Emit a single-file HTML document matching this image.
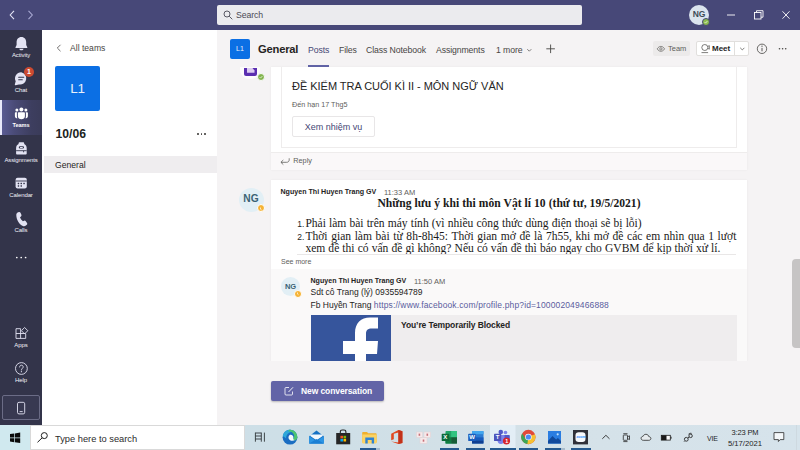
<!DOCTYPE html>
<html lang="vi">
<head>
<meta charset="utf-8">
<title>General (10/06) | Microsoft Teams</title>
<style>
*{box-sizing:border-box;margin:0;padding:0}
html,body{width:800px;height:450px;overflow:hidden;background:#f5f3f4}
body{position:relative;font-family:"Liberation Sans",sans-serif;color:#252423;font-size:9px;-webkit-font-smoothing:antialiased}
.abs{position:absolute}
svg{position:absolute;overflow:visible}
/* title bar */
#titlebar{left:0;top:0;width:800px;height:29.600px;background:#474878;box-shadow:0 0 1px #2b2c55}
#search{left:217px;top:5px;width:365px;height:20px;background:#ebebee;border-radius:2px}
#search span{position:absolute;left:19px;top:4px;font-size:8.700px;letter-spacing:-.1px;color:#4a4a55;line-height:12px}
#me{left:689px;top:5px;width:20px;height:20px;border-radius:50%;background:#dbe4ee;color:#3e4c57;font-size:8.500px;font-weight:bold;text-align:center;line-height:19px;letter-spacing:-.2px}
#medot{left:701.800px;top:18.200px;width:8.200px;height:8.200px;border-radius:50%;background:#8cbd4f;border:1px solid #464775}
/* left rail */
#rail{left:0;top:30px;width:42px;height:395px;background:#33344a}
.rl{position:absolute;left:0;width:42px;text-align:center;color:#f0f0f8;font-size:6px;line-height:8px;letter-spacing:-.1px}
#railsel{left:0;top:100px;width:42px;height:35px;background:linear-gradient(90deg,#5c5d97 0%,#4a4b77 35%,#3d3e5f 75%,#3a3b59 100%)}
#railbar{left:0;top:100px;width:2px;height:35px;background:#e9e9fb}
#badge{left:24px;top:67px;width:10px;height:10px;border-radius:50%;background:#cc4a31;color:#fff;font-size:7px;font-weight:bold;text-align:center;line-height:10px}
#phonebox{left:2px;top:395px;width:38px;height:25px;border:1px solid #6b6c86;border-radius:2px;background:#383951}
/* team list */
#list{left:42px;top:30px;width:175px;height:395px;background:#ffffff}
#allteams{left:70px;top:43px;font-size:8.600px;color:#484644;line-height:11px}
#tile{left:55px;top:66px;width:45px;height:45px;background:#0b6fe4;border-radius:2px;color:#e9f1fb;font-size:13.500px;letter-spacing:-.3px;text-align:center;line-height:46px}
#tname{left:55.500px;top:126.500px;font-size:12.200px;font-weight:bold;color:#201f1e;line-height:14px}
#chsel{left:44px;top:156px;width:173px;height:17px;background:#efedef}
#chname{left:55px;top:160px;font-size:8.600px;color:#252423;line-height:11px}
.dots i{position:absolute;width:1.6px;height:1.6px;border-radius:50%;background:#484644;top:0}
/* main */
#main{left:217px;top:30px;width:583px;height:395px;background:#f5f3f4}
#hdrline{left:217px;top:67px;width:583px;height:1px;background:#eceaea}
#chtile{left:230px;top:39px;width:20px;height:20px;background:#0b6fe4;border-radius:2px;color:#e9f1fb;font-size:7px;text-align:center;line-height:20px}
#chtitle{left:258px;top:42px;font-size:11.200px;font-weight:bold;color:#252423;line-height:15px;letter-spacing:-.2px}
.tab{position:absolute;top:45px;font-size:8.700px;color:#484644;line-height:11px;letter-spacing:-.1px;white-space:nowrap}
#tabul{left:308px;top:65.400px;width:21px;height:2.200px;background:#6264a7}
#teambtn{left:653px;top:41px;width:37px;height:15px;background:#eceaea;border-radius:2px}
#teambtn span{position:absolute;left:15px;top:3px;font-size:7.5px;color:#605e5c;line-height:9px}
#meetbtn{left:696px;top:41px;width:53px;height:15px;background:#ffffff;border:1px solid #e1dfdd;border-radius:2px}
#meetbtn span{position:absolute;left:15px;top:2px;font-size:8px;font-weight:bold;color:#252423;line-height:10px}
#meetsep{left:734px;top:42px;width:1px;height:13px;background:#e1dfdd}
/* cards */
.card{position:absolute;background:#ffffff}
#c1{left:271px;top:67px;width:476px;height:103px;box-shadow:0 0 2px rgba(0,0,0,.06)}
#c1in{left:281px;top:67px;width:456px;height:81px;border:1px solid #eeecec;border-top:none}
#c1foot{left:271px;top:151.500px;width:476px;height:18px;background:#faf8f9;border-top:1px solid #eeecec}
#asgtitle{left:292px;top:79px;font-size:11px;color:#252423;line-height:15px;letter-spacing:-.03px;white-space:nowrap}
#due{left:292px;top:100px;font-size:7.200px;color:#605e5c;line-height:9px}
#xem{left:292px;top:115.500px;width:83px;height:21px;border:1px solid #e8e6e7;border-radius:2px;background:#fff;text-align:center;font-size:9px;color:#464775;line-height:21px}
#reply{left:293.300px;top:156px;font-size:7.300px;color:#605e5c;line-height:9px}
#c2{left:271px;top:179.500px;width:476px;height:181px;box-shadow:0 0 2px rgba(0,0,0,.06)}
#c2sub{left:271px;top:269px;width:476px;height:91.600px;background:#faf9f9}
.nm{position:absolute;font-size:7.100px;font-weight:bold;color:#252423;line-height:9px;white-space:nowrap}
.tm{position:absolute;font-size:7.5px;color:#605e5c;line-height:9px;white-space:nowrap}
.jl{text-align:justify;text-align-last:justify}
.ser{position:absolute;font-family:"Liberation Serif",serif;color:#1b1a19;white-space:nowrap}
.av{position:absolute;border-radius:50%;background:#e2eff5;color:#3a6274;font-weight:bold;text-align:center}
.away{position:absolute;border-radius:50%;background:#f5b335;border:1px solid #fff}
#seemore{left:281px;top:257px;font-size:7px;color:#605e5c;line-height:9px}
.body9{position:absolute;font-size:9px;color:#252423;line-height:11px;white-space:nowrap}
#fbcard{left:311px;top:315.400px;width:426px;height:45.200px;background:#efedee}
#fbimg{left:311px;top:315.400px;width:80px;height:45.200px;background:#36559c;overflow:hidden}
#fbtitle{left:401px;top:320px;font-size:8.5px;font-weight:bold;color:#252423;line-height:10px;white-space:nowrap;letter-spacing:-.1px}
#fade{left:217px;top:360.600px;width:583px;height:12px;background:#f5f3f4}
#newconv{left:271px;top:381px;width:113px;height:20px;background:#6264a7;border-radius:2px;box-shadow:0 1px 2px rgba(0,0,0,.25)}
#newconv span{position:absolute;left:30px;top:5px;font-size:8.5px;font-weight:bold;color:#fff;line-height:10px;white-space:nowrap;letter-spacing:-.1px}
#scroll{left:792px;top:258.500px;width:12px;height:89px;background:#c6c4c4;border-radius:4px}
/* taskbar */
#taskbar{left:0;top:425px;width:800px;height:25px;background:linear-gradient(90deg,#cddfe7 0%,#cedfe7 40%,#d2e0e7 55%,#d5e2e9 75%,#d6e3eb 100%)}
#start{left:0;top:425px;width:30px;height:25px;background:#d0e9ef}
#tsearch{left:30px;top:425px;width:215px;height:25px;background:#ffffff;border:1px solid #d9d9d9}
#tsearch span{position:absolute;left:24px;top:6.500px;font-size:9.300px;color:#2b2b2b;line-height:12px}
.tk{position:absolute;font-size:7.5px;color:#1f1f1f;line-height:9px;white-space:nowrap}
.run{position:absolute;top:448.300px;height:1.700px;background:#25598f}
</style>
</head>
<body>
<!-- TITLE BAR -->
<div id="titlebar" class="abs"></div>
<svg style="left:9px;top:10px" width="26" height="10" viewBox="0 0 26 10"><path d="M5 .8 1.2 5 5 9.200" fill="none" stroke="#e4e4f5" stroke-width="1.100"/><path d="M19.500 .8 23.300 5 19.500 9.200" fill="none" stroke="#a9aad3" stroke-width="1.100"/></svg>
<div id="search" class="abs"><svg style="left:6px;top:5px" width="10" height="10" viewBox="0 0 10 10"><circle cx="4" cy="4" r="3" fill="none" stroke="#4a4a55" stroke-width="0.900"/><path d="M6.200 6.200 9.300 9.300" stroke="#4a4a55" stroke-width="0.900"/></svg><span>Search</span></div>
<div id="me" class="abs">NG</div>
<div id="medot" class="abs"></div><svg style="left:703.900px;top:20.400px" width="4" height="4" viewBox="0 0 4 4"><path d="M.6 2.100l1 1 1.800-2.100" fill="none" stroke="#f4f9ee" stroke-width=".7"/></svg>
<svg style="left:726px;top:10px" width="70" height="10" viewBox="0 0 70 10"><path d="M1 5h8" stroke="#fff" stroke-width="0.900"/><rect x="28.500" y="2.500" width="6.500" height="6.500" fill="none" stroke="#fff" stroke-width="0.900"/><path d="M30.500 2.500v-1.800h6.500v6.500h-2" fill="none" stroke="#fff" stroke-width="0.900"/><path d="M56.500 1.300l7 7.400M63.500 1.300l-7 7.400" stroke="#fff" stroke-width="0.900"/></svg>

<!-- LEFT RAIL -->
<div id="rail" class="abs"></div>
<div id="railsel" class="abs"></div>
<div id="railbar" class="abs"></div>
<div id="phonebox" class="abs"></div>
<div id="railicons">
<svg style="left:0;top:30px" width="42" height="395" viewBox="0 30 42 395">
<!-- bell -->
<path d="M21.400 37c-3.100 0-4.800 2.300-4.800 5.200v2.900l-1.100 2.100c-.2.400 0 .8.500.8h10.800c.5 0 .7-.4.500-.8l-1.100-2.100v-2.900c0-2.900-1.700-5.200-4.800-5.200z" fill="#e3e3f3"/>
<path d="M19.300 48.700h4.200c-.2 1-1 1.600-2.100 1.600s-1.900-.6-2.100-1.600z" fill="#e3e3f3"/>
<!-- chat -->
<path d="M21.200 72.200a6.200 6.200 0 0 0-5.500 9.100l-.9 3.200c-.1.500.3.900.8.800l3.300-.9a6.200 6.200 0 1 0 2.300-12.200z" fill="#e3e3f3"/>
<path d="M18.700 77.200h5M18.700 79.700h3.600" stroke="#33344a" stroke-width="1.100" stroke-linecap="round"/>
<!-- teams -->
<g fill="#ffffff">
<circle cx="21.400" cy="109.500" r="2"/>
<circle cx="16.900" cy="110" r="1.500"/>
<circle cx="25.900" cy="110" r="1.500"/>
<path d="M18.600 112.300h5.600c.4 0 .7.300.7.700v3.300c0 1.700-1.500 3-3.500 3s-3.500-1.300-3.500-3V113c0-.4.300-.7.700-.7z"/>
<path d="M15.600 112.300h1.600c-.2.300-.3.500-.3.800v3.400c0 .7.200 1.300.5 1.800-1.500 0-2.500-.9-2.500-2.300v-3c0-.4.300-.7.700-.7z"/>
<path d="M27.200 112.300h-1.600c.2.300.3.500.3.800v3.400c0 .7-.2 1.300-.5 1.800 1.500 0 2.500-.9 2.500-2.300v-3c0-.4-.3-.7-.7-.7z"/>
</g>
<!-- assignments (backpack) -->
<path d="M19.500 142.300h3.800c.5 0 .9.400.9.900v.9c1.500.7 2.500 2.200 2.500 3.900v5.400c0 .6-.5 1.100-1.100 1.100h-8.400c-.6 0-1.100-.5-1.100-1.100V148c0-1.700 1-3.200 2.500-3.900v-.9c0-.5.400-.9.900-.9z" fill="#e3e3f3"/>
<rect x="18.800" y="146.300" width="5.200" height="2.300" rx="1" fill="#33344a"/>
<rect x="19.900" y="146.900" width="3" height="1.100" rx=".5" fill="#e3e3f3"/>
<path d="M16.100 150.700h10.600" stroke="#33344a" stroke-width=".9"/>
<path d="M23.600 150.700v1.600" stroke="#33344a" stroke-width=".9"/>
<!-- calendar -->
<rect x="15.600" y="177.700" width="11.200" height="10.800" rx="2" fill="#e3e3f3"/>
<path d="M15.600 181h11.200" stroke="#33344a" stroke-width=".9"/>
<g fill="#33344a"><rect x="17.700" y="182.700" width="1.500" height="1.500" rx=".4"/><rect x="20.500" y="182.700" width="1.500" height="1.500" rx=".4"/><rect x="23.300" y="182.700" width="1.500" height="1.500" rx=".4"/><rect x="17.700" y="185.200" width="1.500" height="1.500" rx=".4"/><rect x="20.500" y="185.200" width="1.500" height="1.500" rx=".4"/></g>
<!-- calls -->
<path d="M17.600 212.500l1.300-.4c.7-.2 1.400.2 1.700.8l.8 1.900c.2.600.1 1.200-.4 1.600l-1 .9c.5 1.500 1.600 3 2.900 3.900l1.300-.5c.6-.2 1.200 0 1.600.5l1.200 1.700c.4.600.3 1.300-.2 1.800l-.9.900c-.8.800-2 1-3 .5-4-2-6.500-6.500-6.600-11.100 0-1.100.5-2.100 1.300-2.500z" fill="#e3e3f3"/>
<!-- more -->
<g fill="#ffffff"><circle cx="16.800" cy="257.500" r=".85"/><circle cx="21.200" cy="257.500" r=".85"/><circle cx="25.600" cy="257.500" r=".85"/></g>
<!-- apps -->
<g fill="none" stroke="#e3e3f3" stroke-width=".9" stroke-linejoin="round">
<path d="M20.600 328.700h-4.600v9.700h9.700v-4.600"/>
<path d="M20.600 328.700v9.700M16 333.500h9.700"/>
<path d="M24.600 327.500l3.200 3.200-3.200 3.200-3.200-3.200z"/>
</g>
<!-- help -->
<circle cx="21.400" cy="368.500" r="5.900" fill="none" stroke="#e3e3f3" stroke-width=".9"/>
<path d="M19.600 367c0-1.100.8-1.800 1.800-1.800s1.800.7 1.800 1.700c0 1.400-1.800 1.500-1.800 3.100" fill="none" stroke="#e3e3f3" stroke-width=".9" stroke-linecap="round"/>
<circle cx="21.400" cy="371.700" r=".6" fill="#e3e3f3"/>
<!-- phone -->
<rect x="17.500" y="402.300" width="7.200" height="11.600" rx="1.500" fill="none" stroke="#e3e3f3" stroke-width=".9"/>
<path d="M20 411.600h2.300" stroke="#e3e3f3" stroke-width=".9" stroke-linecap="round"/>
</svg>
</div>
<div class="rl" style="top:51px">Activity</div>
<div class="rl" style="top:86px">Chat</div>
<div class="rl" style="top:121px;color:#fff;font-weight:bold;font-size:5.600px">Teams</div>
<div class="rl" style="top:156px">Assignments</div>
<div class="rl" style="top:191px">Calendar</div>
<div class="rl" style="top:226px">Calls</div>
<div class="rl" style="top:341px">Apps</div>
<div class="rl" style="top:376px">Help</div>
<div id="badge" class="abs">1</div>

<!-- TEAM LIST -->
<div id="list" class="abs"></div>
<svg style="left:56px;top:44px" width="6" height="8" viewBox="0 0 6 8"><path d="M4.500 .8 1.300 4 4.500 7.200" fill="none" stroke="#605e5c" stroke-width="0.900"/></svg>
<div id="allteams" class="abs">All teams</div>
<div id="tile" class="abs">L1</div>
<div id="tname" class="abs">10/06</div>
<div class="abs dots" style="left:197px;top:133px"><i style="left:0"></i><i style="left:3.500px"></i><i style="left:7px"></i></div>
<div id="chsel" class="abs"></div>
<div id="chname" class="abs">General</div>

<!-- MAIN -->
<div id="main" class="abs"></div>
<div id="chtile" class="abs">L1</div>
<div id="chtitle" class="abs">General</div>
<div class="tab" style="left:308px;color:#464775">Posts</div>
<div class="tab" style="left:339px">Files</div>
<div class="tab" style="left:366px">Class Notebook</div>
<div class="tab" style="left:436px">Assignments</div>
<div class="tab" style="left:496px">1 more</div>
<div id="tabul" class="abs"></div>
<div id="teambtn" class="abs"><span>Team</span></div>
<div id="meetbtn" class="abs"><span>Meet</span></div>
<div id="meetsep" class="abs"></div>

<svg style="left:217px;top:30px" width="583" height="38" viewBox="217 30 583 38">
<path d="M527.300 49.200l2 2 2-2" fill="none" stroke="#605e5c" stroke-width=".8"/>
<path d="M546.300 48.800h8.600M550.600 44.500v8.600" stroke="#484644" stroke-width=".9"/>
<path d="M657.200 48.900c1-1.700 2.300-2.500 3.700-2.500s2.700.8 3.700 2.500c-1 1.600-2.300 2.400-3.700 2.400s-2.700-.8-3.700-2.400z" fill="none" stroke="#605e5c" stroke-width=".7"/><circle cx="660.900" cy="48.900" r="1.200" fill="none" stroke="#605e5c" stroke-width=".7"/>
<g fill="none" stroke="#484644" stroke-width=".7"><circle cx="704.800" cy="47.500" r="3"/><path d="M701.500 52.600h6.600M708 46.400l1.300-.8v3.600l-1.300-.8"/></g>
<path d="M740.200 47.800l2.100 2.100 2.100-2.100" fill="none" stroke="#605e5c" stroke-width=".8"/>
<circle cx="762" cy="48.800" r="4.700" fill="none" stroke="#484644" stroke-width=".8"/><path d="M762 47.900v3.400" stroke="#484644" stroke-width=".9"/><circle cx="762" cy="46.200" r=".6" fill="#484644"/>
<g fill="#484644"><circle cx="779.500" cy="48.800" r=".8"/><circle cx="782.600" cy="48.800" r=".8"/><circle cx="785.700" cy="48.800" r=".8"/></g>
</svg>
<!-- CARD 1 -->
<div id="c1" class="card"></div>
<div id="c1in" class="abs"></div>
<div id="c1foot" class="abs"></div>
<div id="asgtitle" class="abs">ĐỀ KIỂM TRA CUỐI KÌ II - MÔN NGỮ VĂN</div>
<div id="due" class="abs">Đến hạn 17 Thg5</div>
<div id="xem" class="abs">Xem nhiệm vụ</div>
<svg style="left:280px;top:158px" width="10" height="7" viewBox="0 0 10 7"><path d="M9.200 .3v1.500c0 1.500-1 2.500-2.500 2.500h-5.700M3.300 2l-2.400 2.300 2.400 2.300" fill="none" stroke="#605e5c" stroke-width=".8"/></svg>
<div id="reply" class="abs">Reply</div>

<div class="abs" style="left:240px;top:67px;width:20px;height:12px;background:#fdfcfc;border-radius:0 0 9px 9px"></div>
<div class="abs" style="left:243.500px;top:67.500px;width:13.500px;height:8.300px;background:#5b2fb0;border-radius:0 0 2px 2px"></div>
<svg style="left:246.500px;top:67.500px" width="8" height="5" viewBox="0 0 8 5"><path d="M0 0h5.500l2 2.500v2.300h-7.500z" fill="#dccdf1"/></svg>
<div class="abs" style="left:256.800px;top:73.300px;width:8px;height:8px;border-radius:50%;background:#82b44d;border:.7px solid #fbfbfb"></div>
<svg style="left:258.800px;top:75.300px" width="4" height="4" viewBox="0 0 4 4"><path d="M.6 2.100l1 1 1.800-2.100" fill="none" stroke="#f4f9ee" stroke-width=".7"/></svg>
<!-- CARD 2 -->
<div id="c2" class="card"></div>
<div id="c2sub" class="abs"></div>
<div class="av" style="left:238.500px;top:188px;width:25px;height:24px;font-size:10.200px;line-height:22px">NG</div>
<div class="away" style="left:256.500px;top:204.300px;width:8px;height:8px"></div><svg style="left:259px;top:206.500px" width="4" height="4" viewBox="0 0 4 4"><path d="M1.500 .5v1.700l1.200.8" fill="none" stroke="#fff" stroke-width=".7"/></svg>
<div class="nm" style="left:280.500px;top:188px">Nguyen Thi Huyen Trang GV</div>
<div class="tm" style="left:384px;top:188px">11:33 AM</div>
<div class="ser jl" style="left:377.500px;top:197.300px;width:263px;font-size:11.600px;font-weight:bold;line-height:13px">Những lưu ý khi thi môn Vật lí 10 (thứ tư, 19/5/2021)</div>
<div class="abs" style="left:297.300px;top:219.500px;font-size:8.500px;line-height:9px;color:#252423">1.</div>
<div class="ser jl" style="left:305.400px;top:217.300px;width:336.300px;font-size:11.550px;line-height:13px">Phải làm bài trên máy tính (vì nhiều công thức dùng điện thoại sẽ bị lỗi)</div>
<div class="abs" style="left:297.300px;top:232.500px;font-size:8.500px;line-height:9px;color:#252423">2.</div>
<div class="ser jl" style="left:305.400px;top:229.500px;width:431px;font-size:11.550px;line-height:13px">Thời gian làm bài từ 8h-8h45: Thời gian mở đề là 7h55, khi mở đề các em nhìn qua 1 lượt</div>
<div class="abs" style="left:297px;top:241px;width:440px;height:13px;overflow:hidden"><div class="ser jl" style="left:8.400px;top:1.300px;width:415px;font-size:11.550px;line-height:13px">xem đề thi có vấn đề gì không? Nếu có vấn đề thì báo ngay cho GVBM để kịp thời xử lí.</div></div>
<div class="abs" style="left:297px;top:254px;width:439px;height:1px;background:#e9e7e7"></div>
<div id="seemore" class="abs">See more</div>
<div class="av" style="left:281px;top:277px;width:19px;height:19px;font-size:7.500px;line-height:19px">NG</div>
<div class="away" style="left:294px;top:289.800px;width:7.800px;height:7.800px"></div><svg style="left:296.200px;top:291.900px" width="4" height="4" viewBox="0 0 4 4"><path d="M1.500 .5v1.600l1.100.7" fill="none" stroke="#fff" stroke-width=".65"/></svg>
<div class="nm" style="left:310.500px;top:276.500px">Nguyen Thi Huyen Trang GV</div>
<div class="tm" style="left:414px;top:276.500px">11:50 AM</div>
<div class="body9" style="left:310.500px;top:287px;font-size:8.500px">Sdt cô Trang (lý) 0935594789</div>
<div class="body9" style="left:310.500px;top:300px;font-size:8.500px">Fb Huyền Trang <span style="color:#5b5d9e;letter-spacing:.13px">https://www.facebook.com/profile.php?id=100002049466888</span></div>
<div id="fbcard" class="abs"></div>
<div id="fbimg" class="abs"><svg style="left:0;top:0" width="80" height="46" viewBox="311 315 80 46"><path d="M355 361.500v-7.500h-12v-13h12v-8c0-10 6-15.600 15-15.600h8v11.200h-6c-4.300 0-6 1.700-6 5.400v7h12l-1 13h-11v7.500z" fill="#ffffff"/></svg></div>
<div id="fbtitle" class="abs">You’re Temporarily Blocked</div>
<div id="fade" class="abs"></div>
<div id="newconv" class="abs"><svg style="left:13px;top:5px" width="10" height="10" viewBox="0 0 10 10"><path d="M8.500 5.500v2.500a1 1 0 0 1-1 1h-5.500a1 1 0 0 1-1-1v-5.500a1 1 0 0 1 1-1h3" fill="none" stroke="#fff" stroke-width="0.800"/><path d="M4.500 6 9 1.300" stroke="#fff" stroke-width="0.900"/></svg><span>New conversation</span></div>
<div id="scroll" class="abs"></div>

<!-- TASKBAR -->
<div id="taskbar" class="abs"></div>
<div id="start" class="abs"></div>
<div id="tsearch" class="abs"><span>Type here to search</span></div>
<svg id="tbicons" style="left:0;top:425px" width="800" height="25" viewBox="0 425 800 25">
<!-- windows logo -->
<g fill="#0a0a0a"><path d="M10 434.100l4.200-.6v4h-4.200zM14.900 433.400l5.300-.8v4.900h-5.300zM10 438.200h4.200v4l-4.200-.6zM14.900 438.200h5.300v4.900l-5.300-.8z"/></g>
<!-- search glyph -->
<circle cx="44.300" cy="435.600" r="3" fill="none" stroke="#1f1f1f" stroke-width="1"/><path d="M42.200 437.800l-4.700 4.500" stroke="#1f1f1f" stroke-width="1"/>
<!-- task view -->
<g fill="none" stroke="#2f3438" stroke-width=".9"><path d="M255.400 432.600v9.100M261.300 432.600v9.100M255.400 433h5.900M255.400 436h5.900M255.400 439h5.900M264.400 432.600v9.100"/></g>
<!-- edge -->
<circle cx="290" cy="437.200" r="7.400" fill="#1a6dc2"/>
<path d="M282.700 436.300c.5-3.800 3.600-6.500 7.300-6.500 2.300 0 4.300 1 5.700 2.600-2-.9-4.600-.8-6.500.4-2.100 1.300-3.200 3.400-3.100 5.800-1.200-1.400-2.600-2.400-3.400-2.300z" fill="#2fa8d8"/>
<path d="M290 429.800c4.100 0 7.400 3.300 7.400 7.400 0 1.900-1.500 3.100-3.200 3.100-1.300 0-2-.5-2.300-1.100 2.300-.7 3-3.400 1.400-5.500-1.200-1.600-3.300-2.500-5.300-2.300.6-1 1.300-1.600 2-1.600z" fill="#4cc470"/>
<path d="M289.600 435c2.300-.7 4.300 1.200 3.700 3.200-.3 1 .3 1.700 1.500 1.800-1.700 1.300-4.400 1-5.700-.8-1-1.300-.7-3.200.5-4.200z" fill="#f4f9fc"/>
<!-- mail -->
<path d="M309.200 436.200l7.300-5.600 7.300 5.600v7.300h-14.600z" fill="#1672c4"/>
<path d="M310.300 436l6.200 4.300 6.200-4.300v-1.500h-12.400z" fill="#f3f8fc"/>
<path d="M309.200 436.200l7.300 4.800 7.300-4.800v7.300h-14.600z" fill="#2c95e4"/>
<path d="M309.200 443.500l7.300-4.500 7.300 4.500z" fill="#1b7fd4"/>
<!-- store -->
<path d="M340.300 433.200v-1.300c0-1.100.9-1.900 2-1.900h1.600c1.100 0 2 .8 2 1.900v1.300" fill="none" stroke="#262626" stroke-width="1.100"/>
<rect x="336.200" y="433" width="14" height="11.300" fill="#262626"/>
<rect x="340.400" y="435.800" width="2.600" height="2.600" fill="#f25022"/><rect x="343.500" y="435.800" width="2.600" height="2.600" fill="#7fba00"/><rect x="340.400" y="438.900" width="2.600" height="2.600" fill="#00a4ef"/><rect x="343.500" y="438.900" width="2.600" height="2.600" fill="#ffb900"/>
<!-- explorer -->
<path d="M362.200 433c0-.6.400-1 1-1h3.800l1.200 1.200h7.400c.6 0 1 .4 1 1v8.300h-14.400z" fill="#efb02e"/>
<path d="M362.200 434.600h14.400v8c0 .5-.3.800-.7.800h-13c-.4 0-.7-.3-.7-.8z" fill="#fbd364"/>
<path d="M365.300 437.600h8.800v5.800h-2.400v-3.300h-4v3.300h-2.400z" fill="#2f83d3"/>
<!-- office -->
<path d="M391.200 440.300v-6.600l7.200-3.600 4 1.200v11.600l-4 1.200-7.200-2.600 7.200.9v-9.800l-4.600 1.100v5.600z" fill="#e2471f"/>
<path d="M398.400 430.100l4 1.200v11.600l-4 1.200z" fill="#c2321a"/>
<!-- keyboard app -->
<g fill="#f6e9ea" stroke="#e3cfd2" stroke-width=".5"><rect x="416.500" y="432" width="6" height="5.500"/><rect x="424" y="432" width="6.500" height="5.500"/><rect x="420" y="437.800" width="7" height="5.500"/></g>
<g fill="#c7727b"><rect x="418.600" y="433.600" width="1.600" height="2.200"/><rect x="426.500" y="433.600" width="1.600" height="2.200"/><rect x="422.700" y="439.500" width="1.600" height="2.200"/></g>
<!-- excel -->
<rect x="445.500" y="431" width="11.500" height="12.600" rx=".8" fill="#21a366"/>
<rect x="451.200" y="431" width="5.800" height="6.300" fill="#33c481"/>
<rect x="445.500" y="437.300" width="5.700" height="6.300" fill="#107c41"/><rect x="451.200" y="437.300" width="5.800" height="6.300" fill="#185c37"/>
<rect x="441.700" y="433.700" width="7.600" height="7.400" rx=".7" fill="#0e6b38"/>
<!-- word -->
<rect x="472" y="431" width="11.500" height="12.600" rx=".8" fill="#2b7cd3"/>
<rect x="472" y="431" width="11.500" height="3.200" fill="#41a5ee"/>
<rect x="472" y="437.400" width="11.500" height="3.100" fill="#185abd"/><rect x="472" y="440.500" width="11.500" height="3.100" fill="#103f91"/>
<rect x="468.200" y="433.700" width="7.600" height="7.400" rx=".7" fill="#1a5dbe"/>
<!-- teams active bg -->
<rect x="490" y="425" width="25.500" height="25" fill="#e3eef6"/>
<circle cx="505.500" cy="432.500" r="1.800" fill="#7b83eb"/><circle cx="500.800" cy="432" r="2.300" fill="#5059c9"/>
<path d="M503.500 435h5.500c.5 0 .8.300.8.800v3.500c0 1.700-1.300 3-3 3s-3.300-1.300-3.300-3z" fill="#5059c9"/>
<path d="M497.500 435h7v5.500c0 2-1.700 3.400-3.700 3.400s-3.300-1.500-3.300-3.400z" fill="#7b83eb"/>
<rect x="494" y="433.700" width="7.200" height="7.400" rx=".7" fill="#4b53bc"/>
<circle cx="506.500" cy="441" r="3.600" fill="#d6242f"/>
<!-- chrome -->
<circle cx="528.400" cy="437" r="7.200" fill="#e04a3a"/>
<path d="M528.400 437l-6.200 3.700a7.200 7.200 0 0 0 5.200 3.400l3.500-5.400z" fill="#3aa757"/>
<path d="M522.200 433.400a7.200 7.200 0 0 0 0 7.300l3.300-2z" fill="#3aa757"/>
<path d="M528.400 437h7.100a7.200 7.200 0 0 1-8.100 7.100z" fill="#f6c132"/>
<path d="M535 434.200a7.200 7.200 0 0 1 .5 2.800l-3.500 2-3-2.500z" fill="#f6c132"/>
<circle cx="528.400" cy="437" r="3.300" fill="#f4f4f4"/><circle cx="528.400" cy="437" r="2.600" fill="#4a8af4"/>
<!-- photos -->
<rect x="548" y="431" width="13" height="12.600" fill="#2a7de1"/>
<path d="M548 441l4.500-5 3.600 3.600 1.800-1.600 3.100 3v2.600h-13z" fill="#114a9c"/>
<circle cx="557.700" cy="434.300" r="1.100" fill="#bfe0fb"/>
<!-- zoom -->
<rect x="573" y="430" width="15" height="14.400" fill="#2f3039"/>
<rect x="575.500" y="432.300" width="10" height="9.600" rx="3.200" fill="#f7f9fc"/>
<!-- tray chevron -->
<path d="M602.300 438.800l3.600-3.500 3.600 3.500" fill="none" stroke="#2a2a2a" stroke-width=".9"/>
<!-- meet now -->
<g fill="none" stroke="#2a2a2a" stroke-width=".8"><rect x="623.300" y="435" width="4.200" height="5.300" rx=".6"/><path d="M627.500 436.800l2-1v3.800l-2-1M623.300 433.700h4.200M623.300 441.600h4.200"/></g>
<!-- cloud -->
<path d="M643.300 440.300c-1.300 0-2.200-.9-2.200-2 0-1.100.9-2 2-2 .3-1.200 1.500-2 2.800-2 1.500 0 2.700 1 2.900 2.300 1.200.1 2.100.9 2.100 1.900s-.9 1.800-2.100 1.800z" fill="#e6ebee" stroke="#2a2a2a" stroke-width=".8"/>
<!-- battery -->
<rect x="661.300" y="435.300" width="9" height="4.800" fill="#fafafa" stroke="#1a1a1a" stroke-width=".8"/><rect x="661.300" y="435.300" width="5.200" height="4.800" fill="#1a1a1a"/><rect x="670.600" y="436.700" width=".9" height="2" fill="#1a1a1a"/>
<!-- network -->
<g fill="none" stroke="#2a2a2a" stroke-width=".9"><circle cx="686.300" cy="439.300" r="1.900"/><circle cx="690.600" cy="435.900" r="1.700"/><path d="M687.800 438.100l1.400-1.100M688.500 434.200c.8-.8 2-1.100 3.100-.8M684.300 441.400l-.6.600"/></g>
<!-- notifications -->
<path d="M774 432.600h9.800v7h-3.600l-1.800 1.900v-1.900h-4.400z" fill="#f4f7f9" stroke="#2a2a2a" stroke-width=".8"/>
<path d="M796.500 425v25" stroke="#c9d2d8" stroke-width=".6"/>
</svg>
<div class="abs" style="left:443.300px;top:433.800px;font-size:6px;font-weight:bold;color:#fff;line-height:7px">X</div>
<div class="abs" style="left:469.200px;top:433.800px;font-size:6px;font-weight:bold;color:#fff;line-height:7px">W</div>
<div class="abs" style="left:495.800px;top:433.800px;font-size:6px;font-weight:bold;color:#fff;line-height:7px">T</div>
<div class="abs" style="left:505.200px;top:438px;font-size:5.500px;font-weight:bold;color:#fff;line-height:6px">1</div>
<div class="abs" style="left:576.300px;top:435px;font-size:3.800px;font-weight:bold;color:#2d8cff;line-height:4px;letter-spacing:-.1px">zoom</div>
<div class="run" style="left:359.500px;width:16px"></div><div class="run" style="left:375.500px;width:4.500px;background:#a9bccb"></div>
<div class="run" style="left:440px;width:19px"></div>
<div class="run" style="left:466px;width:19px"></div>
<div class="run" style="left:490px;width:26px"></div>
<div class="run" style="left:519px;width:19px"></div>
<div class="run" style="left:545px;width:16px"></div>
<div class="run" style="left:561px;width:4px;background:#a9bccb"></div>
<div class="run" style="left:571px;width:20px"></div>
<div class="tk" style="left:707px;top:433.500px;font-size:7px;letter-spacing:-.2px">VIE</div>
<div class="tk" style="left:725px;top:428px;width:40px;text-align:center;letter-spacing:-.15px">3:23 PM</div>
<div class="tk" style="left:725px;top:439px;width:40px;text-align:center;font-size:7.700px">5/17/2021</div>
</body>
</html>
